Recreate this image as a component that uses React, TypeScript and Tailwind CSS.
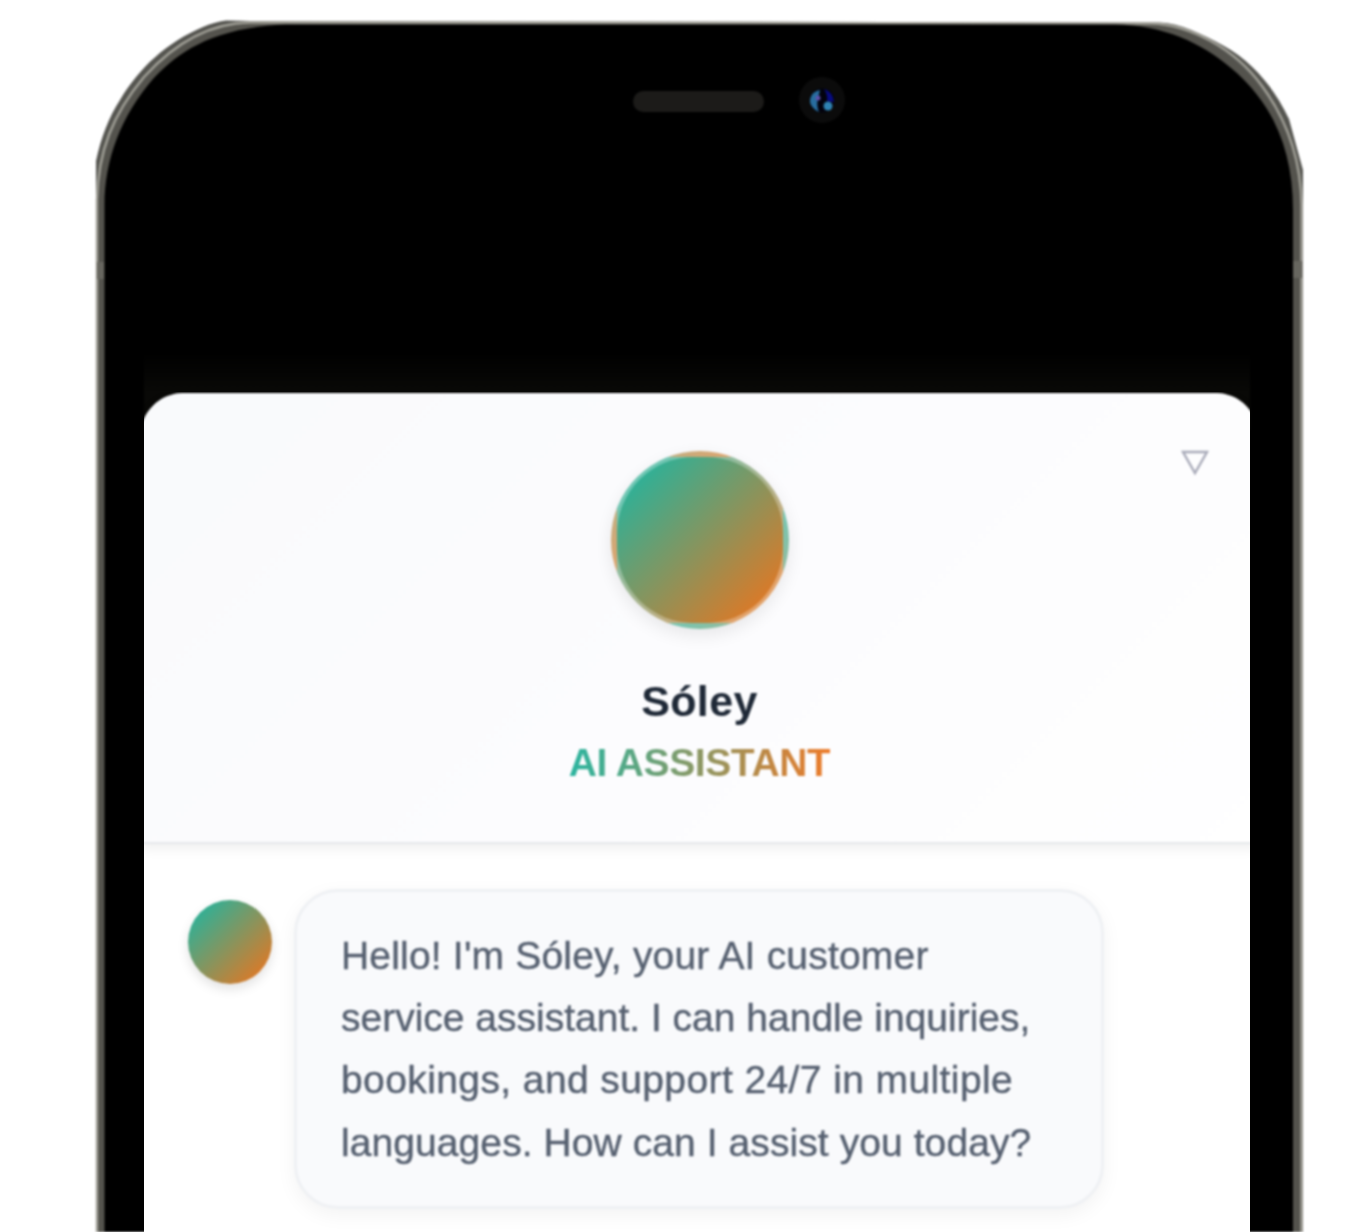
const GRADIENT = "bg-[linear-gradient(135deg,#33af94_14%,#d67b2b_86%)]";

function PhoneShell() {
  return (
    <svg
      className="absolute inset-0 blur-[0.9px]"
      width="1360"
      height="1232"
      viewBox="0 0 1360 1232"
      fill="none"
      aria-hidden="true"
    >
      <defs>
        <linearGradient id="screenFade" x1="0" y1="352" x2="0" y2="392" gradientUnits="userSpaceOnUse">
          <stop offset="0" stopColor="#000" />
          <stop offset="1" stopColor="#090907" />
        </linearGradient>
      </defs>
      <path
        d="M96 1250V161C101 137 109 117 120 100C139 68 167 42 203 27Q214 22 226 20.500L250 21L1160 22.500C1180 23 1202 34 1224 46C1253 62 1275 89 1289 119Q1295 141 1303 170V1250Z"
        fill="#555550"
      />
      <path
        d="M97 1250V200C98 151 113 114 144 77C172 46 207 23 250 22.500L1150 23.500C1190 24 1235 49 1262 86C1287 120 1301 158 1301.500 205V1250"
        stroke="#a09f96"
        strokeWidth="2.400"
      />
      <path
        d="M99 1250V200C100 154 115 117 146 80C174 49 209 26 250 24L1150 25C1189 26 1233 52 1260 89C1285 123 1299 160 1300 205V1250Z"
        fill="#54534d"
      />
      <path
        d="M104.500 1250V205C104.500 160 121 116 153 79C176 55 208 28 285 24.500H1115C1163 25 1202 43 1231 68C1273 103 1293 150 1293 210V1250Z"
        fill="#000"
      />
      <path d="M97 262H104V279H97ZM1293 261H1302V278H1293Z" fill="#67665f" />
      <path d="M144 352H1250V430H144Z" fill="url(#screenFade)" />
      <rect x="633" y="91" width="131" height="21" rx="10.500" fill="#1c1b19" />
      <circle cx="822" cy="100" r="23" fill="#0b0b0b" />
      <circle cx="822" cy="100.500" r="12" fill="#02020d" />
      <path d="M820 90C812 91 808 99 811 105Q814 110 819 112Q816 105 818 99Z" fill="#286d9e" />
      <path d="M824 89Q833 92 834 102L827 101Q828 95 824 89Z" fill="#070b80" />
      <circle cx="828" cy="106" r="4.500" fill="#2f83b3" />
      <circle cx="818" cy="98" r="2.500" fill="#5f51ac" />
    </svg>
  );
}

function Header() {
  return (
    <header className="relative z-10 flex h-[451px] flex-col items-center rounded-t-[44px] border-b-2 border-[#e6e8eb] bg-[linear-gradient(135deg,#f9fafc_0%,#fcfcfe_50%,#ffffff_100%)] pt-[58px] shadow-[0_4px_14px_rgba(0,0,0,0.07)]">
      <div className={`size-[178px] rounded-full border-[6px] border-white/30 shadow-[0_6px_18px_rgba(0,0,0,0.09)] ${GRADIENT}`}>
        <div className={`size-full rounded-[77px] ${GRADIENT}`} />
      </div>
      <h1 className="mt-[46px] text-[43px] leading-[52px] font-bold tracking-[0.4px] whitespace-nowrap text-[#1f2937]">
        Sóley
      </h1>
      <p className="mt-[14px] bg-[linear-gradient(90deg,#2bb5a0,#ed7a28)] bg-clip-text text-[39px] leading-[44px] font-bold tracking-[-0.4px] whitespace-nowrap text-transparent">
        AI ASSISTANT
      </p>
      <svg className="absolute top-[56px] right-[49px]" width="30" height="28" viewBox="0 0 30 28" fill="none">
        <path d="M3 3H27L15 24Z" stroke="#a9abb9" strokeWidth="2.400" />
      </svg>
    </header>
  );
}

function Message() {
  return (
    <main className="flex items-start pt-[45px] pl-[47.5px]">
      <div className={`mt-[10.5px] size-[84px] shrink-0 rounded-full shadow-[0_5px_12px_rgba(0,0,0,0.12)] ${GRADIENT}`} />
      <p className="ml-[22.5px] h-[320px] w-[810px] rounded-[44px] border-[3px] border-[#eff1f4] bg-[#f9fafc] pt-[33px] pl-[44px] text-[39px] leading-[62.2px] whitespace-nowrap text-[#566070] shadow-[0_6px_20px_rgba(0,0,0,0.05)] [-webkit-text-stroke:0.4px_#566070]">
        <span className="block tracking-[0.19px]">Hello! I'm Sóley, your AI customer</span>
        <span className="block">service assistant. I can handle inquiries,</span>
        <span className="block tracking-[0.4px]">bookings, and support 24/7 in multiple</span>
        <span className="block tracking-[0.08px]">languages. How can I assist you today?</span>
      </p>
    </main>
  );
}

export default function App() {
  return (
    <div className="relative h-[1232px] w-[1360px] overflow-hidden bg-white font-['Liberation_Sans',Arial,sans-serif]">
      <PhoneShell />
      <div className="relative mt-[392px] ml-[144px] h-[840px] w-[1106px] overflow-hidden">
        <div className="mt-px -ml-[4px] h-[860px] w-[1119px] rounded-t-[44px] bg-white blur-[1px]">
          <Header />
          <Message />
        </div>
      </div>
    </div>
  );
}
